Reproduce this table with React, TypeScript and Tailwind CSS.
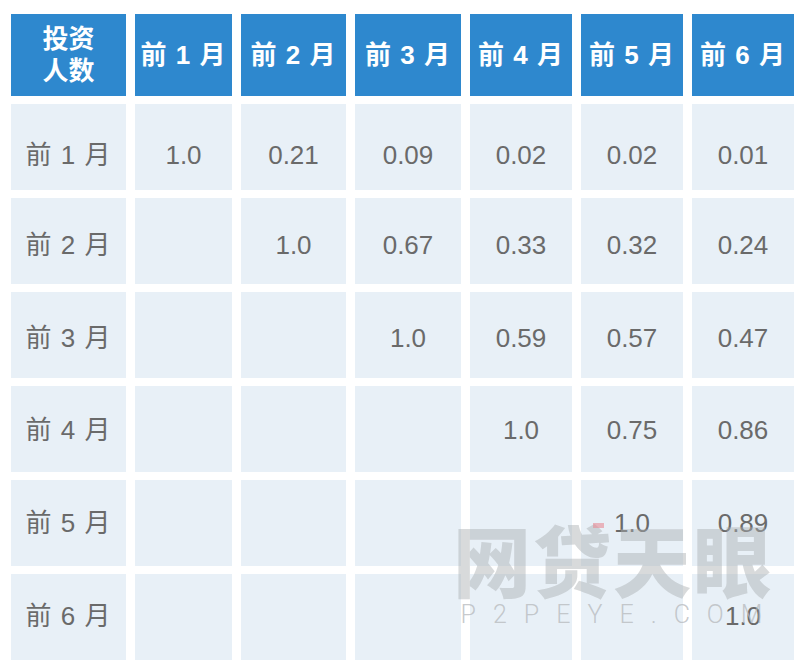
const months = ['前 1 月', '前 2 月', '前 3 月', '前 4 月', '前 5 月', '前 6 月'];

const rows: string[][] = [
  ['1.0', '0.21', '0.09', '0.02', '0.02', '0.01'],
  ['', '1.0', '0.67', '0.33', '0.32', '0.24'],
  ['', '', '1.0', '0.59', '0.57', '0.47'],
  ['', '', '', '1.0', '0.75', '0.86'],
  ['', '', '', '', '1.0', '0.89'],
  ['', '', '', '', '', '1.0'],
];

// text in the source image drifts a little against the cells, row by row
const rowShift = ['pt-[16px]', 'pt-[8px]', 'pt-[6px]', 'pt-[2px]', 'pt-0', 'pb-[2px]'];

export default function App() {
  return (
    <div
      className="relative h-[668px] w-[807px] overflow-hidden bg-white"
      style={{ fontFamily: '"Liberation Sans", "Noto Sans CJK SC", sans-serif' }}
    >
      <div className="ml-[11px] mt-[14px] grid grid-cols-[115px_97px_105px_106px_102px_102px_102px] grid-rows-[82px_repeat(6,86px)] gap-x-[9px] gap-y-[8px]">
        <div className="flex items-center justify-center bg-[#2e88ce] text-center text-[26px] font-bold leading-[32px] text-white">
          投资
          <br />
          人数
        </div>
        {months.map((m) => (
          <div
            key={m}
            className="flex items-center justify-center whitespace-pre bg-[#2e88ce] text-[26px] font-bold tracking-[1px] text-white"
          >
            {m}
          </div>
        ))}

        {rows.map((cells, i) => (
          <Row key={i} label={months[i]} cells={cells} shift={rowShift[i]} />
        ))}
      </div>

      <Watermark />
    </div>
  );
}

function Row({ label, cells, shift }: { label: string; cells: string[]; shift: string }) {
  return (
    <>
      <div
        className={`flex items-center justify-center whitespace-pre bg-[#e8f0f7] text-[26px] tracking-[1px] text-[#6a6a6a] ${shift}`}
      >
        {label}
      </div>
      {cells.map((v, j) => (
        <div
          key={j}
          className={`flex items-center justify-center bg-[#e8f0f7] text-[26px] text-[#6a6a6a] ${shift}`}
        >
          {v}
        </div>
      ))}
    </>
  );
}

function Watermark() {
  return (
    <div className="pointer-events-none absolute left-[452px] top-[512px] flex w-[322px] flex-col items-center">
      <div className="relative">
        <span
          className="block text-[78px] font-black leading-[92px] tracking-[2px] text-[#a9acaf]/45"
          style={{ fontFamily: '"Noto Sans CJK SC", sans-serif' }}
        >
          网贷天眼
        </span>
        <span className="absolute left-[140px] top-[11px] h-[5px] w-[11px] bg-[#e88a95]/60" />
      </div>
      <span
        className="-mt-[2px] ml-[14px] block text-[25px] font-light leading-[26px] tracking-[17px] text-[#b9bcbf]/80"
        style={{ fontFamily: 'Roboto, "Liberation Sans", sans-serif' }}
      >
        P2PEYE.COM
      </span>
    </div>
  );
}
